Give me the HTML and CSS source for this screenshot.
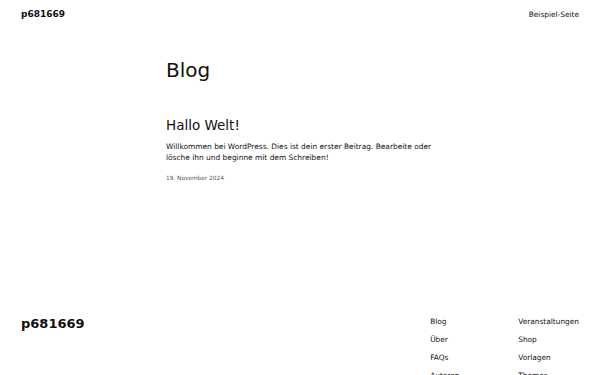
FILE: index.html
```html
<!DOCTYPE html>
<html lang="de">
<head>
<meta charset="utf-8">
<title>Blog – p681669</title>
<link rel="stylesheet" href="styles.css">
</head>
<body>
<header class="site-header">
  <a class="site-title" href="#">p681669</a>
  <nav class="header-nav"><a href="#">Beispiel-Seite</a></nav>
</header>
<main class="content">
  <h1 class="page-title">Blog</h1>
  <article class="post">
    <h2 class="post-title">Hallo Welt!</h2>
    <p class="excerpt">Willkommen bei WordPress. Dies ist dein erster Beitrag. Bearbeite oder lösche ihn und beginne mit dem Schreiben!</p>
    <div class="post-date">19. November 2024</div>
  </article>
</main>
<footer class="site-footer">
  <a class="footer-title" href="#">p681669</a>
  <div class="footer-nav">
    <ul class="footer-col">
      <li><a href="#">Blog</a></li>
      <li><a href="#">Über</a></li>
      <li><a href="#">FAQs</a></li>
      <li><a href="#">Autoren</a></li>
    </ul>
    <ul class="footer-col">
      <li><a href="#">Veranstaltungen</a></li>
      <li><a href="#">Shop</a></li>
      <li><a href="#">Vorlagen</a></li>
      <li><a href="#">Themes</a></li>
    </ul>
  </div>
</footer>
</body>
</html>
```

FILE: styles.css
```css
html, body {
  margin: 0;
  padding: 0;
  background: #ffffff;
}
body {
  font-family: "DejaVu Sans", sans-serif;
  color: #111111;
}
a {
  color: inherit;
  text-decoration: none;
}
.site-header {
  display: flex;
  justify-content: space-between;
  align-items: center;
  padding: 8px 21px 0 21px;
  height: 12px;
}
.site-title {
  font-size: 9px;
  font-weight: bold;
}
.header-nav {
  font-size: 7.4px;
}
.content {
  width: 268px;
  margin: 0 auto;
  padding-top: 38px;
  min-height: 259px;
}
.page-title {
  font-size: 20px;
  font-weight: normal;
  margin: 0;
  line-height: 24px;
}
.post {
  margin-top: 35px;
}
.post-title {
  font-size: 13.5px;
  font-weight: normal;
  margin: 0;
  line-height: 17px;
}
.excerpt {
  font-size: 7.45px;
  line-height: 11px;
  margin: 7px 0 0 0;
}
.post-date {
  font-size: 5.8px;
  color: #555555;
  margin-top: 12px;
}
.site-footer {
  display: flex;
  justify-content: space-between;
  align-items: flex-start;
  padding: 0 21px;
}
.footer-title {
  font-size: 13px;
  font-weight: bold;
  line-height: 14px;
}
.footer-nav {
  display: flex;
}
.footer-col {
  list-style: none;
  margin: 0;
  padding: 0;
  width: 88px;
  font-size: 7.4px;
}
.footer-col:last-child {
  width: auto;
}
.footer-col li {
  line-height: 10px;
  margin-bottom: 8px;
}
```
